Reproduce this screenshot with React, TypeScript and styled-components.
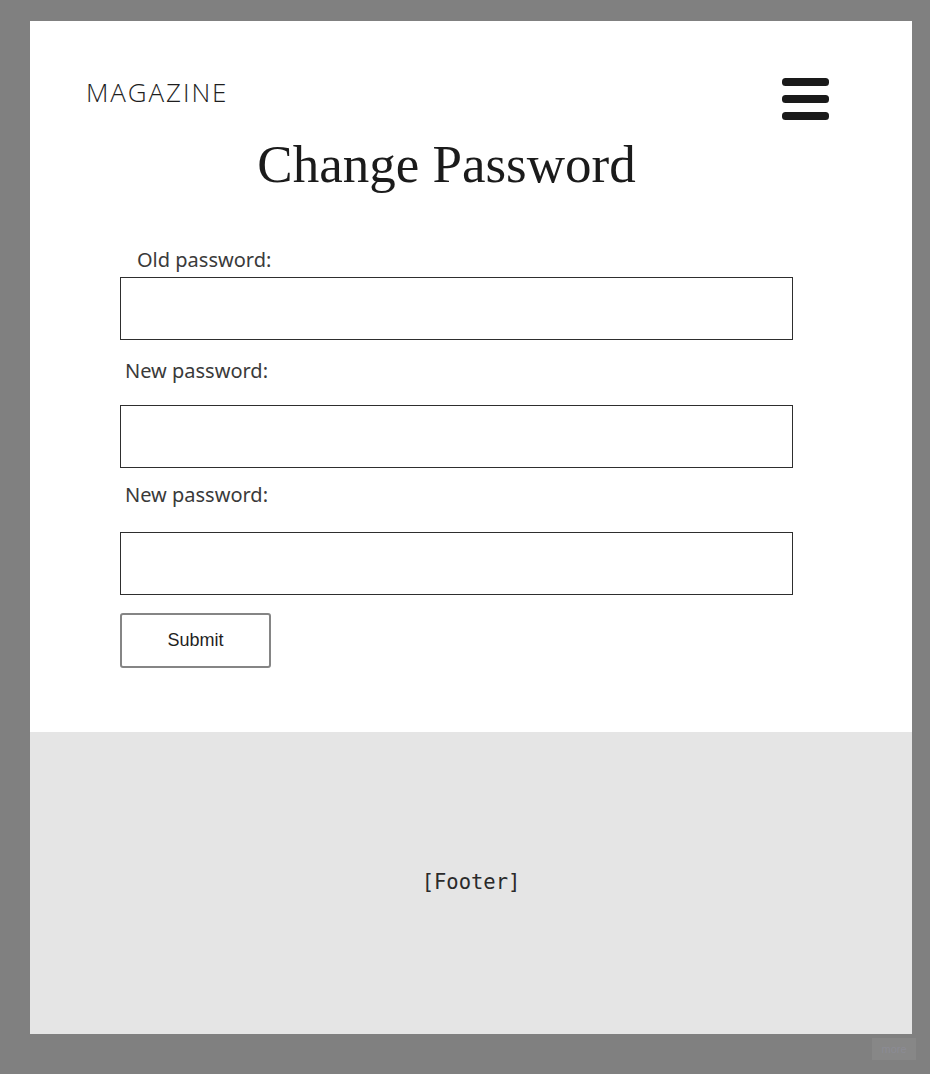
import React from "react";
import styled, { createGlobalStyle } from "styled-components";

const GlobalStyle = createGlobalStyle`
  html, body {
    margin: 0;
    padding: 0;
    background: #808080;
  }
  * { box-sizing: border-box; }
`;

const Page = styled.div`
  position: relative;
  padding: 21px 18px 40px 30px;
  min-height: 1074px;
`;

const Panel = styled.div`
  background: #ffffff;
`;

const Main = styled.main`
  padding: 57px 0 64px 0;
`;

const Header = styled.header`
  display: flex;
  justify-content: space-between;
  align-items: flex-start;
  padding: 0 83px 0 56px;
`;

const Brand = styled.div`
  font-family: "Open Sans", "Noto Sans", sans-serif;
  font-weight: 300;
  font-size: 26px;
  line-height: 26px;
  color: #1e1e1e;
  margin-top: 1px;
  letter-spacing: 1.9px;
`;

const MenuButton = styled.button`
  border: none;
  background: none;
  padding: 0;
  margin: 0;
  display: block;
  cursor: pointer;
  line-height: 0;
`;

const Title = styled.h1`
  margin: 18px 0 0 0;
  padding-right: 49px;
  text-align: center;
  font-family: "Liberation Serif", "DejaVu Serif", serif;
  font-weight: 400;
  font-size: 53px;
  line-height: 53px;
  color: #1b1b1b;
`;

const Form = styled.form`
  display: flex;
  flex-direction: column;
  align-items: flex-start;
  padding-left: 90px;
  margin-top: 57px;
`;

const Label = styled.label<{ $indent: number; $top: number; $gap: number }>`
  display: block;
  font-family: "Noto Sans", "Open Sans", sans-serif;
  font-size: 20px;
  line-height: 24px;
  color: #3a3a3a;
  padding-left: ${(p) => p.$indent}px;
  margin-top: ${(p) => p.$top}px;
  margin-bottom: ${(p) => p.$gap}px;
`;

const Input = styled.input`
  display: block;
  width: 673px;
  height: 63px;
  border: 1px solid #2e2e2e;
  border-radius: 0;
  background: #fff;
  padding: 0 12px;
  font-size: 18px;
  outline: none;
`;

const SubmitButton = styled.button`
  margin-top: 18px;
  width: 151px;
  height: 55px;
  background: #ffffff;
  border: 2px solid #858585;
  border-radius: 3px;
  font-family: "Liberation Sans", Arial, sans-serif;
  font-size: 18px;
  color: #1f1f1f;
  cursor: pointer;
`;

const Footer = styled.footer`
  height: 302px;
  background: #e5e5e5;
  display: flex;
  align-items: center;
  justify-content: center;
  font-family: "DejaVu Sans Mono", "Liberation Mono", monospace;
  font-size: 20.5px;
  color: #2a2a2a;
  padding-bottom: 2px;
`;

const Badge = styled.div`
  position: absolute;
  right: 14px;
  bottom: 14px;
  width: 44px;
  height: 22px;
  background: rgba(255, 255, 255, 0.06);
  display: flex;
  align-items: center;
  justify-content: center;
  font-family: "Liberation Sans", Arial, sans-serif;
  font-size: 11px;
  color: rgba(150, 150, 175, 0.35);
`;

const MenuIcon = () => (
  <svg width="47" height="42" viewBox="0 0 47 42" aria-hidden="true">
    <rect x="0" y="0" width="47" height="8" rx="3.5" fill="#1a1a1a" />
    <rect x="0" y="17" width="47" height="8" rx="3.5" fill="#1a1a1a" />
    <rect x="0" y="34" width="47" height="8" rx="3.5" fill="#1a1a1a" />
  </svg>
);

export default function App() {
  return (
    <>
      <GlobalStyle />
      <Page>
        <Panel>
          <Main>
            <Header>
              <Brand>MAGAZINE</Brand>
              <MenuButton type="button" aria-label="Menu">
                <MenuIcon />
              </MenuButton>
            </Header>
            <Title>Change Password</Title>
            <Form onSubmit={(e) => e.preventDefault()}>
              <Label htmlFor="old" $indent={17} $top={0} $gap={5}>
                Old password:
              </Label>
              <Input id="old" type="password" />
              <Label htmlFor="new1" $indent={5} $top={19} $gap={22}>
                New password:
              </Label>
              <Input id="new1" type="password" />
              <Label htmlFor="new2" $indent={5} $top={15} $gap={25}>
                New password:
              </Label>
              <Input id="new2" type="password" />
              <SubmitButton type="submit">Submit</SubmitButton>
            </Form>
          </Main>
          <Footer>[Footer]</Footer>
        </Panel>
        <Badge>more</Badge>
      </Page>
    </>
  );
}
